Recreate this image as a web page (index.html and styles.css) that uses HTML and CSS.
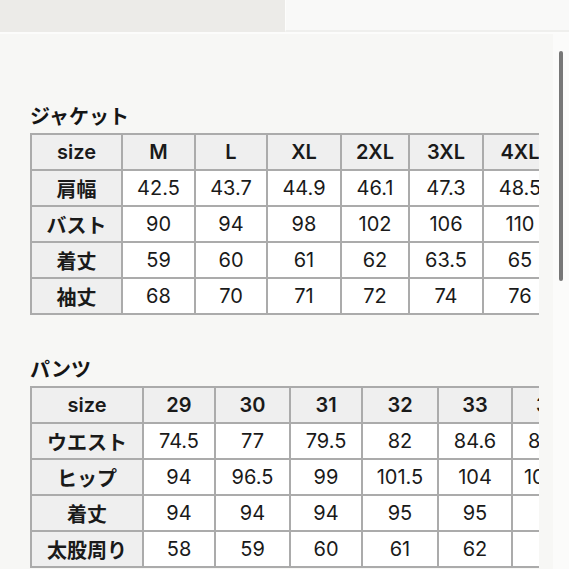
FILE: index.html
```html
<!DOCTYPE html>
<html lang="ja">
<head>
<meta charset="utf-8">
<title>サイズ表</title>
<link rel="stylesheet" href="styles.css">
</head>
<body>
<div class="topbar">
  <div class="topbar-left"></div>
  <div class="topbar-right"></div>
</div>
<div class="main">
  <div class="content">
    <section class="section jacket">
      <h2 class="title">ジャケット</h2>
      <div class="scroller">
        <table class="sizes t1">
          <colgroup>
            <col class="a1"><col class="a2"><col class="a3"><col class="a4"><col class="a5"><col class="a6"><col class="a7">
          </colgroup>
          <tr class="head"><th>size</th><th>M</th><th>L</th><th>XL</th><th>2XL</th><th>3XL</th><th>4XL</th></tr>
          <tr><th>肩幅</th><td>42.5</td><td>43.7</td><td>44.9</td><td>46.1</td><td>47.3</td><td>48.5</td></tr>
          <tr><th>バスト</th><td>90</td><td>94</td><td>98</td><td>102</td><td>106</td><td>110</td></tr>
          <tr><th>着丈</th><td>59</td><td>60</td><td>61</td><td>62</td><td>63.5</td><td>65</td></tr>
          <tr><th>袖丈</th><td>68</td><td>70</td><td>71</td><td>72</td><td>74</td><td>76</td></tr>
        </table>
      </div>
    </section>
    <section class="section pants">
      <h2 class="title">パンツ</h2>
      <div class="scroller">
        <table class="sizes t2">
          <colgroup>
            <col class="b1"><col class="b2"><col class="b3"><col class="b4"><col class="b5"><col class="b6"><col class="b7">
          </colgroup>
          <tr class="head"><th>size</th><th>29</th><th>30</th><th>31</th><th>32</th><th>33</th><th>34</th></tr>
          <tr><th>ウエスト</th><td>74.5</td><td>77</td><td>79.5</td><td>82</td><td>84.6</td><td>86.9</td></tr>
          <tr><th>ヒップ</th><td>94</td><td>96.5</td><td>99</td><td>101.5</td><td>104</td><td>106.5</td></tr>
          <tr><th>着丈</th><td>94</td><td>94</td><td>94</td><td>95</td><td>95</td><td></td></tr>
          <tr><th>太股周り</th><td>58</td><td>59</td><td>60</td><td>61</td><td>62</td><td></td></tr>
        </table>
      </div>
    </section>
  </div>
  <div class="scrollbar"><div class="thumb"></div></div>
</div>
</body>
</html>
```

FILE: styles.css
```css
html, body {
  margin: 0;
  padding: 0;
  background: #f7f7f5;
  height: 100%;
  overflow: hidden;
}
body {
  font-family: "Inter", "Noto Sans CJK JP", sans-serif;
  color: #1a1a1a;
}
.topbar {
  display: flex;
  height: 32px;
  border-bottom: 2px solid #fcfcfb;
}
.topbar-left {
  width: 285px;
  background: #ecebe8;
}
.topbar-right {
  flex: 1;
  background: #f9f9f8;
  border-bottom: 2px solid #efefed;
  border-left: 1px solid #fdfdfc;
}
.main {
  display: flex;
}
.content {
  flex: 1;
  padding: 70px 0 0 30px;
}
.section.pants {
  margin-top: 42px;
}
.title {
  margin: 0 0 5px 0;
  font-family: "Noto Sans CJK JP", sans-serif;
  font-size: 20px;
  line-height: 24px;
  font-weight: 700;
  color: #151515;
}
.scroller {
  width: 509px;
  overflow: hidden;
}
.sizes {
  border-collapse: separate;
  border-spacing: 0;
  table-layout: fixed;
  border-top: 2px solid #ababab;
  border-left: 2px solid #ababab;
  background: #ffffff;
}
.t1 { width: 528px; }
.t2 { width: 557px; }
.a1 { width: 91px; } .a2 { width: 73px; } .a3 { width: 72px; } .a4 { width: 74px; }
.a5 { width: 68px; } .a6 { width: 74px; } .a7 { width: 74px; }
.b1 { width: 112px; } .b2 { width: 72px; } .b3 { width: 75px; } .b4 { width: 72px; }
.b5 { width: 76px; } .b6 { width: 74px; } .b7 { width: 74px; }
.sizes th, .sizes td {
  box-sizing: border-box;
  height: 36px;
  padding: 0;
  border-right: 2px solid #ababab;
  border-bottom: 2px solid #ababab;
  text-align: center;
  vertical-align: middle;
  font-size: 20px;
  white-space: nowrap;
  overflow: hidden;
}
.sizes th {
  background: #efefef;
  font-weight: 700;
}
.sizes td {
  font-weight: 400;
  background: #ffffff;
}
.sizes .head th {
  font-weight: 600;
}
.sizes tr:not(.head) th {
  font-family: "Noto Sans CJK JP", sans-serif;
  font-weight: 700;
}
.scrollbar {
  width: 16px;
  height: 535px;
  background: #fbfbfa;
}
.thumb {
  width: 4px;
  height: 230px;
  margin: 17px 0 0 6px;
  background: #777777;
  border-radius: 2px;
}
```
